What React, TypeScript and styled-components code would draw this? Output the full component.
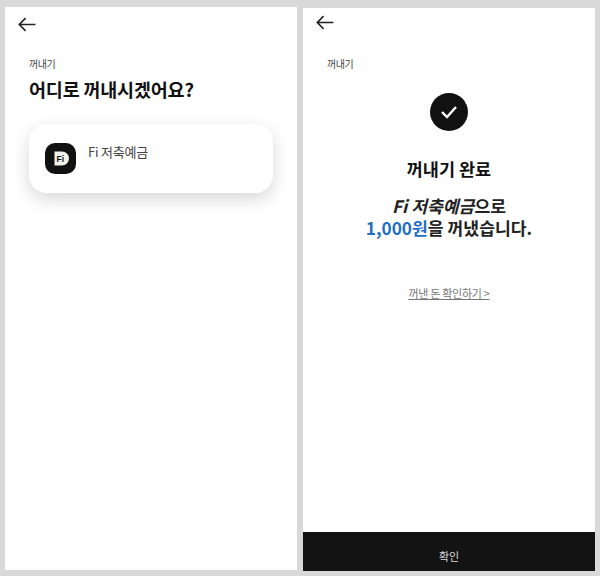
import React from 'react';
import styled, { createGlobalStyle } from 'styled-components';

const GlobalStyle = createGlobalStyle`
  html, body {
    margin: 0;
    padding: 0;
    background: #d9d9d9;
  }

  body {
    font-family: "Noto Sans CJK KR", "Noto Sans", sans-serif;
    color: #111;
  }
`;

const Page = styled.div`
  width: 600px;
  height: 576px;
  overflow: hidden;
  background: #d9d9d9;

  display: grid;
  grid-template-columns: 292px 292px;
  column-gap: 6px;
  padding: 7px 5px 5px;
  box-sizing: border-box;
`;

const Screen = styled.section<{ $shift?: number }>`
  display: flex;
  flex-direction: column;
  background: #fff;
  height: 563px;
  margin-top: ${({ $shift }) => $shift ?? 0}px;
`;

const BackButton = styled.div<{ $left: number; $top: number }>`
  display: flex;
  height: 17px;
  padding: ${({ $top }) => $top}px 0 0 ${({ $left }) => $left}px;
`;

const SmallLabel = styled.div<{ $left: number; $top: number }>`
  font-size: 10px;
  line-height: 14px;
  color: #444;
  letter-spacing: -0.4px;
  margin: ${({ $top }) => $top}px 0 0 ${({ $left }) => $left}px;
`;

const Heading = styled.h1`
  margin: 5px 0 0 24px;
  font-size: 18.5px;
  line-height: 26px;
  font-weight: 700;
  letter-spacing: -0.2px;
`;

const AccountCard = styled.div`
  display: flex;
  align-items: flex-start;
  gap: 12px;
  width: 244px;
  height: 69px;
  box-sizing: border-box;
  margin: 22px 0 0 24px;
  padding: 19px 16px;
  background: #fff;
  border-radius: 18px;
  box-shadow: 0 6px 18px rgba(0, 0, 0, 0.16);
`;

const AccountName = styled.span`
  font-size: 13px;
  line-height: 18px;
  color: #444;
  letter-spacing: -0.2px;
`;

const Result = styled.div`
  flex: 1;
  display: flex;
  flex-direction: column;
  align-items: center;
`;

const CheckBadge = styled.div`
  display: flex;
  align-items: center;
  justify-content: center;
  width: 38px;
  height: 38px;
  margin-top: 22px;
  border-radius: 50%;
  background: #111;
`;

const ResultTitle = styled.h2`
  margin: 26px 0 0;
  font-size: 17.5px;
  line-height: 24px;
  font-weight: 700;
`;

const ResultMessage = styled.p`
  margin: 14px 0 0;
  font-size: 17.2px;
  line-height: 22px;
  font-weight: 700;
  text-align: center;
  color: #222;
`;

const AccountEmphasis = styled.em`
  font-style: italic;
  font-weight: 700;
`;

const Amount = styled.strong`
  font-weight: 700;
  color: #1f6fc4;
`;

const HistoryLink = styled.a`
  margin-top: 46px;
  font-size: 11px;
  line-height: 16px;
  letter-spacing: -0.3px;
  color: #777;
  text-decoration: underline;
`;

const ConfirmButton = styled.div`
  display: flex;
  align-items: flex-end;
  justify-content: center;
  height: 39px;
  box-sizing: border-box;
  padding-bottom: 7px;
  background: #131313;
  color: #ddd;
  font-size: 11px;
  line-height: 16px;
`;

function BackArrow() {
  return (
    <svg width="18" height="15" viewBox="0 0 19 16" fill="none" stroke="#222" strokeWidth="1.7">
      <path d="M18.5 8H1.5M8 1.2 1.3 8 8 14.8" />
    </svg>
  );
}

function FiLogo() {
  return (
    <svg width="31" height="31" viewBox="0 0 31 31" style={{ flexShrink: 0 }}>
      <rect width="31" height="31" rx="10" fill="#111" />
      <path d="M9.5 8.5h7.5a7 7 0 0 1 7 7 7 7 0 0 1-7 7H9.5z" fill="#f4f1ea" />
      <text x="11.5" y="19.4" fontSize="8.5" fontWeight="700" fill="#111" fontFamily="Liberation Sans, sans-serif">Fi</text>
    </svg>
  );
}

export default function App() {
  return (
    <>
      <GlobalStyle />
      <Page>
        <Screen>
          <BackButton $left={13} $top={10}>
            <BackArrow />
          </BackButton>
          <SmallLabel $left={24} $top={23}>꺼내기</SmallLabel>
          <Heading>어디로 꺼내시겠어요?</Heading>
          <AccountCard>
            <FiLogo />
            <AccountName>Fi 저축예금</AccountName>
          </AccountCard>
        </Screen>
        <Screen $shift={1}>
          <BackButton $left={13} $top={7}>
            <BackArrow />
          </BackButton>
          <SmallLabel $left={24} $top={25}>꺼내기</SmallLabel>
          <Result>
            <CheckBadge>
              <svg width="18" height="14" viewBox="0 0 18 14" fill="none" stroke="#fff" strokeWidth="2.4">
                <path d="M2 7l5 5 9-10" />
              </svg>
            </CheckBadge>
            <ResultTitle>꺼내기 완료</ResultTitle>
            <ResultMessage>
              <AccountEmphasis>Fi 저축예금</AccountEmphasis>으로
              <br />
              <Amount>1,000원</Amount>을 꺼냈습니다.
            </ResultMessage>
            <HistoryLink>꺼낸 돈 확인하기 &gt;</HistoryLink>
          </Result>
          <ConfirmButton>확인</ConfirmButton>
        </Screen>
      </Page>
    </>
  );
}
